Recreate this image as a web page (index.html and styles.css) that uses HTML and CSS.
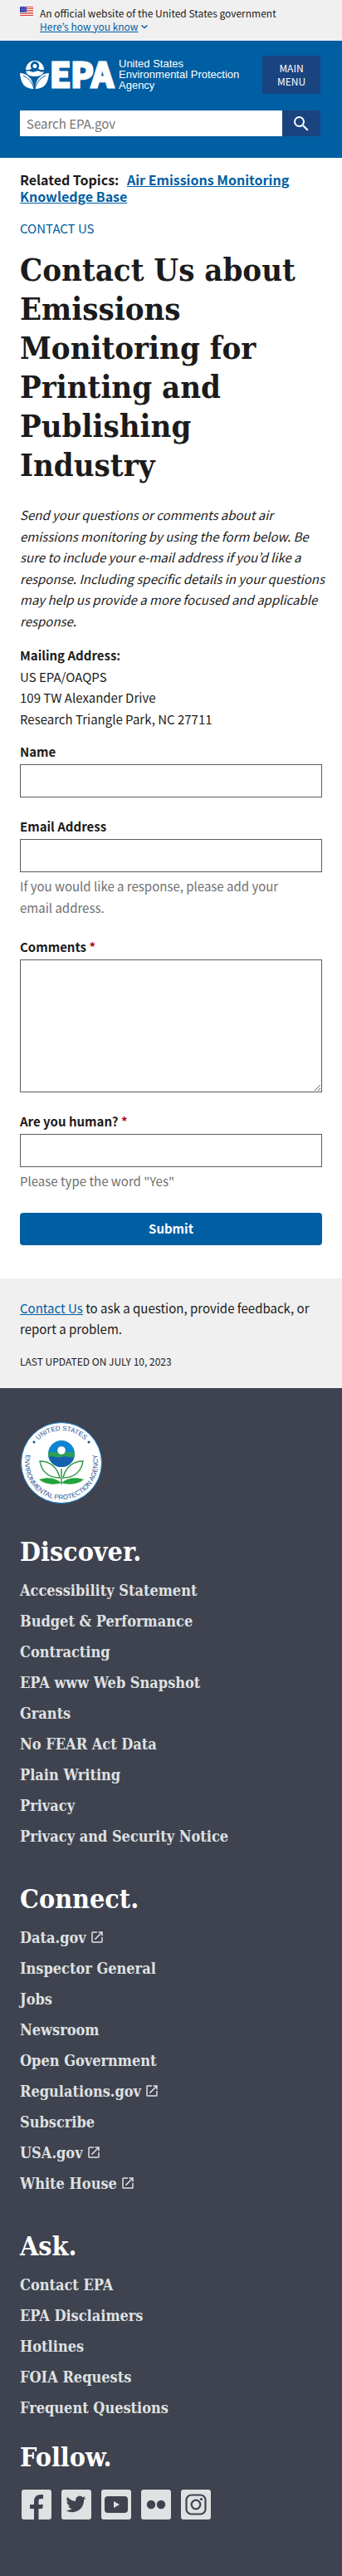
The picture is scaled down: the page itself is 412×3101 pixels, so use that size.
FILE: index.html
```
<!DOCTYPE html>
<html lang="en">
<head>
<meta charset="utf-8">
<meta name="viewport" content="width=device-width, initial-scale=1">
<title>Contact Us about Emissions Monitoring for Printing and Publishing Industry | US EPA</title>
<link rel="stylesheet" href="styles.css">
</head>
<body>
<svg class="sprite" aria-hidden="true">
  <symbol id="launch" viewBox="0 0 24 24"><path fill="currentColor" d="M19 19H5V5h7V3H5a2 2 0 0 0-2 2v14a2 2 0 0 0 2 2h14c1.100 0 2-.9 2-2v-7h-2v7zM14 3v2h3.590l-9.830 9.830 1.410 1.410L19 6.410V10h2V3h-7z"/></symbol>
</svg>

<section class="banner" aria-label="Official government website">
  <svg class="flag" viewBox="0 0 16 11" aria-hidden="true">
    <path fill="#fff" d="M0 0h16v11H0z"/>
    <path stroke="#d83933" stroke-width="1" d="M0 .5h16M0 2.500h16M0 4.500h16M0 6.500h16M0 8.500h16M0 10.500h16"/>
    <path fill="#2a2fa8" d="M0 0h8v7H0z"/>
    <path stroke="#fff" stroke-width=".8" stroke-dasharray=".8 1.200" d="M1 1.500h7M2 3.500h6M1 5.500h7"/>
  </svg>
  <div>
    <p class="banner-text">An official website of the United States government</p>
    <button class="banner-toggle" type="button"><span>Here’s how you know</span><svg viewBox="0 0 10 8" aria-hidden="true"><path fill="none" stroke="currentColor" stroke-width="1.500" d="M1.500 2.500 5 5.500l3.500-3"/></svg></button>
  </div>
</section>

<header class="header">
  <div class="header-top">
    <a class="logo" href="#" aria-label="US EPA home">
      <svg viewBox="0 0 270 38" role="img" aria-hidden="true">
        <g fill="#fff">
          <path d="M7 13a11 11 0 0 1 22 0h-4.500l-2.500-1.500a5.200 5.200 0 1 0-8 0L11.500 13z"/>
          <circle cx="18" cy="8.500" r="2.500"/>
          <path d="M7 15q3-1.500 6 0t6 0 5 0 5 0q-2 6-11 6T7 15z"/>
          <path d="M0 17c8 0 16 6 17 19C6 36 1 30 0 17zM35 17c-8 0-16 6-17 19 11 0 16-6 17-19z"/>
        </g>
        <path fill="none" stroke="#005ea2" stroke-width="1" d="M4 20q10 4 13 16M31 20q-10 4-13 16"/>
        <text class="logo-mark" x="36" y="34">EPA</text>
        <text class="logo-name" x="119" y="10">United States</text>
        <text class="logo-name" x="119" y="23">Environmental Protection</text>
        <text class="logo-name" x="119" y="36">Agency</text>
      </svg>
    </a>
    <button class="menu-button" type="button">MAIN MENU</button>
  </div>
  <form class="search" role="search">
    <input type="search" placeholder="Search EPA.gov" aria-label="Search EPA.gov">
    <button type="submit" aria-label="Search"><svg viewBox="0 0 24 24" aria-hidden="true"><path fill="currentColor" d="M15.500 14h-.79l-.28-.27A6.470 6.470 0 0 0 16 9.500 6.500 6.500 0 1 0 9.500 16c1.610 0 3.090-.59 4.230-1.570l.27.28v.79l5 4.990L20.490 19l-4.990-5zm-6 0a4.500 4.500 0 1 1 0-9 4.500 4.500 0 0 1 0 9z"/></svg></button>
  </form>
</header>

<main class="main">
  <p class="related">Related Topics: <a href="#">Air Emissions Monitoring Knowledge Base</a></p>
  <p class="section-name"><a href="#">CONTACT US</a></p>
  <h1>Contact Us about Emissions Monitoring for Printing and Publishing Industry</h1>
  <p class="intro">Send your questions or comments about air emissions monitoring by using the form below. Be sure to include your e-mail address if you’d like a response. Including specific details in your questions may help us provide a more focused and applicable response.</p>
  <p class="address"><strong>Mailing Address:</strong><br>US EPA/OAQPS<br>109 TW Alexander Drive<br>Research Triangle Park, NC 27711</p>
  <form class="form">
    <div class="field">
      <label for="name">Name</label>
      <input id="name" type="text">
    </div>
    <div class="field">
      <label for="email">Email Address</label>
      <input id="email" type="email" aria-describedby="email-hint">
      <p class="hint" id="email-hint">If you would like a response, please add your email address.</p>
    </div>
    <div class="field">
      <label for="comments">Comments <span class="required">*</span></label>
      <textarea id="comments" required></textarea>
    </div>
    <div class="field">
      <label for="human">Are you human? <span class="required">*</span></label>
      <input id="human" type="text" aria-describedby="human-hint" required>
      <p class="hint" id="human-hint">Please type the word "Yes"</p>
    </div>
    <button class="submit" type="submit">Submit</button>
  </form>
</main>

<section class="page-info">
  <p><a href="#">Contact Us</a> to ask a question, provide feedback, or report a problem.</p>
  <p class="updated">LAST UPDATED ON JULY 10, 2023</p>
</section>

<footer class="footer">
  <svg class="seal" viewBox="0 0 100 100" role="img" aria-label="United States Environmental Protection Agency seal">
    <defs>
      <path id="arc-top" d="M11 50a39 39 0 0 1 78 0"/>
      <path id="arc-bottom" d="M11.900 28A44 44 0 1 0 88.100 28"/>
    </defs>
    <circle cx="50" cy="50" r="48.500" fill="#fff" stroke="#1479c4" stroke-width="1"/>
    <circle cx="50" cy="39" r="16" fill="#0e86cf"/>
    <path fill="#2f9e58" d="M34.200 37h31.600v6H34.200z"/>
    <path fill="#1461ad" d="M34.500 43q4-1.500 8 0t8 0 8 0 7 0A16 16 0 0 1 34.500 43z"/>
    <circle cx="50" cy="35" r="4.800" fill="#fff"/>
    <g fill="none" stroke="#35994a" stroke-width="1.500">
      <path d="M50 57v19M48 68C45 55 36 48 24 48c2 12 10 20 24 20zM52 68c3-13 12-20 24-20-2 12-10 20-24 20z"/>
    </g>
    <path fill="#22a33c" d="M50 74c-7-6-17-7-27-4 7 6 18 7 27 4zM50 74c7-6 17-7 27-4-7 6-18 7-27 4z"/>
    <text class="seal-text" text-anchor="middle"><textPath href="#arc-top" startOffset="50%">UNITED STATES</textPath></text>
    <text class="seal-text" text-anchor="middle"><textPath href="#arc-bottom" startOffset="50%">ENVIRONMENTAL PROTECTION AGENCY</textPath></text>
    <circle cx="17" cy="25" r="1.500" fill="#1d4f91"/>
    <circle cx="83" cy="25" r="1.500" fill="#1d4f91"/>
  </svg>
  <nav class="footer-group" aria-labelledby="discover">
    <h2 id="discover">Discover.</h2>
    <ul>
      <li><a href="#">Accessibility Statement</a></li>
      <li><a href="#">Budget &amp; Performance</a></li>
      <li><a href="#">Contracting</a></li>
      <li><a href="#">EPA www Web Snapshot</a></li>
      <li><a href="#">Grants</a></li>
      <li><a href="#">No FEAR Act Data</a></li>
      <li><a href="#">Plain Writing</a></li>
      <li><a href="#">Privacy</a></li>
      <li><a href="#">Privacy and Security Notice</a></li>
    </ul>
  </nav>
  <nav class="footer-group" aria-labelledby="connect">
    <h2 id="connect">Connect.</h2>
    <ul>
      <li><a href="#">Data.gov<svg class="external"><use href="#launch"/></svg></a></li>
      <li><a href="#">Inspector General</a></li>
      <li><a href="#">Jobs</a></li>
      <li><a href="#">Newsroom</a></li>
      <li><a href="#">Open Government</a></li>
      <li><a href="#">Regulations.gov<svg class="external"><use href="#launch"/></svg></a></li>
      <li><a href="#">Subscribe</a></li>
      <li><a href="#">USA.gov<svg class="external"><use href="#launch"/></svg></a></li>
      <li><a href="#">White House<svg class="external"><use href="#launch"/></svg></a></li>
    </ul>
  </nav>
  <nav class="footer-group" aria-labelledby="ask">
    <h2 id="ask">Ask.</h2>
    <ul>
      <li><a href="#">Contact EPA</a></li>
      <li><a href="#">EPA Disclaimers</a></li>
      <li><a href="#">Hotlines</a></li>
      <li><a href="#">FOIA Requests</a></li>
      <li><a href="#">Frequent Questions</a></li>
    </ul>
  </nav>
  <section class="follow">
    <h2>Follow.</h2>
    <div class="social">
      <a href="#" aria-label="Facebook"><svg viewBox="0 0 36 36"><path fill="#3f434f" d="M15 36V23H10v-5h5v-4c0-5 3-8 8-8h3v5h-2.500c-2.500 0-3 1.200-3 3v4H26l-1 5h-4.500v13z"/></svg></a>
      <a href="#" aria-label="Twitter"><svg viewBox="0 0 36 36"><path transform="translate(5.500 5.500)" fill="#3f434f" d="M24 4.560c-.9.390-1.830.65-2.830.77a4.930 4.930 0 0 0 2.170-2.720 9.860 9.860 0 0 1-3.130 1.190 4.920 4.920 0 0 0-8.390 4.490A13.980 13.980 0 0 1 1.670 3.150a4.930 4.930 0 0 0 1.520 6.570 4.900 4.900 0 0 1-2.230-.61c-.05 2.280 1.580 4.410 3.950 4.890a4.930 4.930 0 0 1-2.220.08 4.930 4.930 0 0 0 4.600 3.420A9.900 9.900 0 0 1 0 19.540a13.940 13.940 0 0 0 7.550 2.210c9.140 0 14.310-7.720 14-14.640A10.020 10.020 0 0 0 24 4.560z"/></svg></a>
      <a href="#" aria-label="YouTube"><svg viewBox="0 0 36 36"><rect x="4" y="8" width="28" height="20" rx="4" fill="#3f434f"/><path fill="#dfe1e2" d="m15 14 7 4-7 4z"/></svg></a>
      <a href="#" aria-label="Flickr"><svg viewBox="0 0 36 36"><g fill="#3f434f"><circle cx="12" cy="18" r="5.200"/><circle cx="24" cy="18" r="5.200"/></g></svg></a>
      <a href="#" aria-label="Instagram"><svg viewBox="0 0 36 36"><g fill="none" stroke="#3f434f" stroke-width="2.200"><rect x="6.500" y="6.500" width="23" height="23" rx="6"/><circle cx="18" cy="18" r="5.300"/></g><circle cx="24.500" cy="11.500" r="1.600" fill="#3f434f"/></svg></a>
    </div>
  </section>
</footer>
</body>
</html>
```
FILE: styles.css
```
*, *::before, *::after { box-sizing: border-box; }

body {
  margin: 0;
  background: #fff;
  color: #1b1b1b;
  font-family: "Noto Sans CJK KR", "Open Sans", sans-serif;
  font-size: 15px;
  line-height: 1.7;
}

p, h1, h2, ul { margin: 0; }
ul { padding: 0; list-style: none; }
a { color: #005ea2; }
button, input, textarea { font: inherit; }
.sprite { display: none; }

/* Government banner */
.banner {
  display: flex;
  gap: 8px;
  padding: 8px 24px 9px;
  background: #f0f0f0;
  font-size: 12px;
  line-height: 16px;
}
.flag { width: 16px; height: 11px; flex: none; }
.banner-toggle {
  display: flex;
  align-items: center;
  gap: 3px;
  padding: 0;
  border: 0;
  background: none;
  color: #005ea2;
}
.banner-toggle span { text-decoration: underline; }
.banner-toggle svg { width: 10px; height: 8px; }

/* Header */
.header { padding: 18px 26px 26px 24px; background: #005ea2; }
.header-top {
  display: flex;
  align-items: center;
  justify-content: space-between;
  gap: 12px;
  margin-bottom: 20px;
}
.logo { flex: 0 1 280px; line-height: 0; }
.logo svg { width: 100%; max-width: 270px; overflow: visible; }
.logo-mark {
  fill: #fff;
  stroke: #fff;
  stroke-width: 3px;
  font-size: 41px;
  font-weight: 700;
}
.logo-name { fill: #fff; font-family: "Liberation Sans", sans-serif; font-size: 13px; }
.menu-button {
  flex: none;
  width: 70px;
  padding: 7px 12px;
  border: 0;
  background: #1a4480;
  color: #fff;
  font-size: 12px;
  line-height: 16px;
}
.search { display: flex; }
.search input {
  flex: 1;
  min-width: 0;
  height: 31px;
  padding: 0 8px;
  border: 0;
  border-radius: 0;
  background: #fff;
  color: #1b1b1b;
}
.search input::placeholder { color: #757575; }
.search button {
  display: flex;
  align-items: center;
  justify-content: center;
  width: 46px;
  padding: 0;
  border: 0;
  background: #1a4480;
  color: #fff;
}
.search button svg { width: 24px; height: 24px; }

/* Content */
.main { padding: 16px 24px 40px; }
.related { font-size: 16px; font-weight: 700; line-height: 20px; }
.related a { margin-left: 6px; }
.section-name { margin-top: 19px; line-height: 20px; }
.section-name a { text-decoration: none; }
h1, h2, .footer a { font-family: "DejaVu Serif Condensed", "DejaVu Serif", serif; font-weight: 700; }
h1 { margin: 16px 0 24px; font-size: 38px; line-height: 47px; }
.intro { margin: 0 -8px 16px 0; font-style: italic; }
.address { margin-bottom: 17px; }

.form { display: grid; gap: 25px; }
.field label { display: block; margin-bottom: 5px; font-weight: 700; line-height: 20px; }
.field input, .field textarea {
  display: block;
  width: 100%;
  height: 40px;
  padding: 8px;
  border: 1px solid #565c65;
  border-radius: 0;
  background: #fff;
}
.field textarea { height: 160px; }
.hint { margin-top: 4px; padding-right: 16px; color: #707070; }
.required { color: #b50909; }
.submit {
  height: 39px;
  padding: 0 20px;
  border: 0;
  border-radius: 4px;
  background: #005ea2;
  color: #fff;
  font-weight: 700;
}

/* Page information */
.page-info { padding: 23px 24px 22px; background: #f0f0f0; }
.updated { margin-top: 16px; font-size: 12px; line-height: 20px; }

/* Footer */
.footer { padding: 40px 24px 68px; background: #3f434f; }
.seal { display: block; width: 100px; height: 100px; }
.seal-text { fill: #1d4f91; font-family: "Liberation Sans", sans-serif; font-size: 8px; }
.footer h2 { color: #fff; font-size: 32px; line-height: 37px; }
.footer-group { margin-top: 39px; }
.footer-group ul { padding-top: 9px; }
.footer-group li { display: flex; line-height: 37px; }
.footer-group a {
  display: flex;
  align-items: center;
  gap: 4px;
  color: #dfe1e2;
  font-size: 18px;
  text-decoration: none;
}
.external { width: 18px; height: 18px; }
.follow { margin-top: 23px; }
.social { display: flex; gap: 12px; margin-top: 20px; padding-left: 2px; }
.social a { width: 36px; height: 36px; border-radius: 3px; background: #dfe1e2; }
.social svg { display: block; }
```
